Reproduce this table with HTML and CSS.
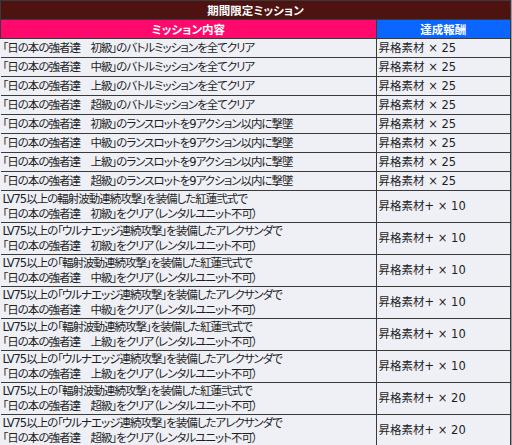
FILE: index.html
```html
<!DOCTYPE html>
<html lang="ja">
<head>
    <meta charset="UTF-8">
    <title>期間限定ミッション</title>
    <link rel="stylesheet" href="styles.css">
</head>
<body>
    <table class="missions">
        <tr><th class="title" colspan="2">期間限定ミッション</th></tr>
        <tr><th class="head-mission">ミッション内容</th><th class="head-reward">達成報酬</th></tr>
        <tr><td>「日の本の強者達　初級」のバトルミッションを全てクリア</td><td>昇格素材 × 25</td></tr>
        <tr><td>「日の本の強者達　中級」のバトルミッションを全てクリア</td><td>昇格素材 × 25</td></tr>
        <tr><td>「日の本の強者達　上級」のバトルミッションを全てクリア</td><td>昇格素材 × 25</td></tr>
        <tr><td>「日の本の強者達　超級」のバトルミッションを全てクリア</td><td>昇格素材 × 25</td></tr>
        <tr><td>「日の本の強者達　初級」のランスロットを9アクション以内に撃墜</td><td>昇格素材 × 25</td></tr>
        <tr><td>「日の本の強者達　中級」のランスロットを9アクション以内に撃墜</td><td>昇格素材 × 25</td></tr>
        <tr><td>「日の本の強者達　上級」のランスロットを9アクション以内に撃墜</td><td>昇格素材 × 25</td></tr>
        <tr><td>「日の本の強者達　超級」のランスロットを9アクション以内に撃墜</td><td>昇格素材 × 25</td></tr>
        <tr class="tall"><td>LV75以上の輻射波動連続攻撃」を装備した紅蓮弐式で<br>「日の本の強者達　初級」をクリア（レンタルユニット不可）</td><td>昇格素材+ × 10</td></tr>
        <tr class="tall"><td>LV75以上の「ウルナエッジ連続攻撃」を装備したアレクサンダで<br>「日の本の強者達　初級」をクリア（レンタルユニット不可）</td><td>昇格素材+ × 10</td></tr>
        <tr class="tall"><td>LV75以上の「輻射波動連続攻撃」を装備した紅蓮弐式で<br>「日の本の強者達　中級」をクリア（レンタルユニット不可）</td><td>昇格素材+ × 10</td></tr>
        <tr class="tall"><td>LV75以上の「ウルナエッジ連続攻撃」を装備したアレクサンダで<br>「日の本の強者達　中級」をクリア（レンタルユニット不可）</td><td>昇格素材+ × 10</td></tr>
        <tr class="tall"><td>LV75以上の「輻射波動連続攻撃」を装備した紅蓮弐式で<br>「日の本の強者達　上級」をクリア（レンタルユニット不可）</td><td>昇格素材+ × 10</td></tr>
        <tr class="tall"><td>LV75以上の「ウルナエッジ連続攻撃」を装備したアレクサンダで<br>「日の本の強者達　上級」をクリア（レンタルユニット不可）</td><td>昇格素材+ × 10</td></tr>
        <tr class="tall"><td>LV75以上の「輻射波動連続攻撃」を装備した紅蓮弐式で<br>「日の本の強者達　超級」をクリア（レンタルユニット不可）</td><td>昇格素材+ × 20</td></tr>
        <tr class="tall"><td>LV75以上の「ウルナエッジ連続攻撃」を装備したアレクサンダで<br>「日の本の強者達　超級」をクリア（レンタルユニット不可）</td><td>昇格素材+ × 20</td></tr>
    </table>
</body>
</html>
```

FILE: styles.css
```css
body {
    margin: 0;
    background: #9a9a9a;
    font-family: "DejaVu Sans", "Noto Sans CJK JP", sans-serif;
    font-size: 11.5px;
    color: #1e1e1e;
    font-feature-settings: "palt";
}
.missions {
    border-collapse: collapse;
    width: 511px;
    background: #eef0f6;
}
.missions th,
.missions td {
    border: 1px solid #3a3a3a;
    padding: 0 2px;
    height: 18px;
    line-height: 15px;
    text-align: left;
    white-space: nowrap;
}
.missions td:first-child { width: 371px; border-left: none; letter-spacing: -1px; }
.missions th { color: #fff; font-weight: bold; text-align: center; font-family: "Noto Sans CJK JP", sans-serif; }
.title { background: #4e1210; }
.head-mission { background: #ff0a6c; border-left: none; }
.head-reward { background: #0a66ff; }
.tall td { height: 31px; }
```
